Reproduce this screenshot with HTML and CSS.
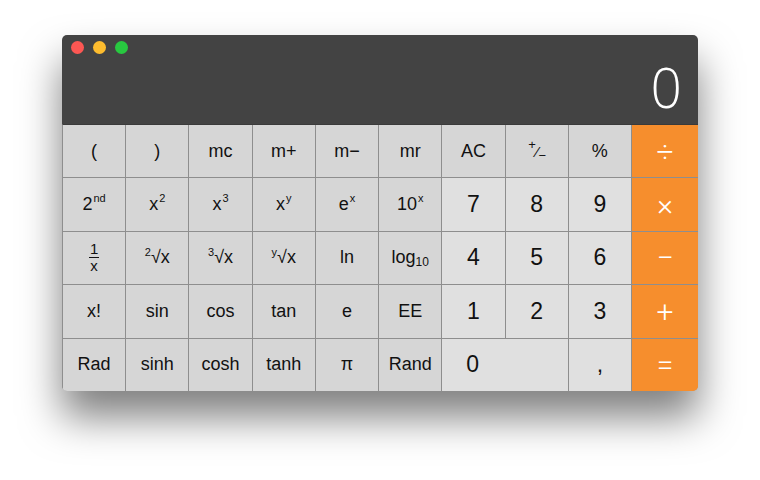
FILE: index.html
```html
<!DOCTYPE html>
<html lang="en">
<head>
    <meta charset="UTF-8">
    <title>Calculator</title>
    <link rel="stylesheet" href="styles.css">
</head>
<body>
    <div class="stage">
        <div class="window">
            <div class="display">
                <div class="lights">
                    <span class="light red"></span>
                    <span class="light yellow"></span>
                    <span class="light green"></span>
                </div>
                <div class="result">0</div>
            </div>

            <div class="keys">
                <button class="key">(</button>
                <button class="key">)</button>
                <button class="key">mc</button>
                <button class="key">m+</button>
                <button class="key">m&minus;</button>
                <button class="key">mr</button>
                <button class="key">AC</button>
                <button class="key small"><sup>+</sup>&frasl;<sub>&minus;</sub></button>
                <button class="key">%</button>
                <button class="key op">&divide;</button>

                <button class="key">2<sup>nd</sup></button>
                <button class="key">x<sup>2</sup></button>
                <button class="key">x<sup>3</sup></button>
                <button class="key">x<sup>y</sup></button>
                <button class="key">e<sup>x</sup></button>
                <button class="key">10<sup>x</sup></button>
                <button class="key num">7</button>
                <button class="key num">8</button>
                <button class="key num">9</button>
                <button class="key op">&times;</button>

                <button class="key"><span class="frac"><span>1</span><span class="den">x</span></span></button>
                <button class="key"><sup class="idx">2</sup>&radic;x</button>
                <button class="key"><sup class="idx">3</sup>&radic;x</button>
                <button class="key"><sup class="idx">y</sup>&radic;x</button>
                <button class="key">ln</button>
                <button class="key">log<sub>10</sub></button>
                <button class="key num">4</button>
                <button class="key num">5</button>
                <button class="key num">6</button>
                <button class="key op">&minus;</button>

                <button class="key">x!</button>
                <button class="key">sin</button>
                <button class="key">cos</button>
                <button class="key">tan</button>
                <button class="key">e</button>
                <button class="key">EE</button>
                <button class="key num">1</button>
                <button class="key num">2</button>
                <button class="key num">3</button>
                <button class="key op">+</button>

                <button class="key">Rad</button>
                <button class="key">sinh</button>
                <button class="key">cosh</button>
                <button class="key">tanh</button>
                <button class="key">&pi;</button>
                <button class="key">Rand</button>
                <button class="key num zero">0</button>
                <button class="key num">,</button>
                <button class="key op">=</button>
            </div>
        </div>
    </div>
</body>
</html>
```

FILE: styles.css
```css
body {
    margin: 0;
    background-color: #ffffff;
    font-family: "Liberation Sans", Arial, sans-serif;
}
.stage {
    padding: 35px 0 89px 62px;
}
.window {
    width: 636px;
    height: 356px;
    border-radius: 5px;
    overflow: hidden;
    display: flex;
    flex-direction: column;
    box-shadow: 0 26px 40px rgba(0, 0, 0, 0.5);
}
.display {
    height: 89px;
    background-color: #434343;
    display: flex;
    flex-direction: column;
    justify-content: space-between;
}
.lights {
    display: flex;
    gap: 9px;
    padding: 6px 0 0 9px;
}
.light {
    width: 13px;
    height: 13px;
    border-radius: 50%;
}
.red { background-color: #fc5753; }
.yellow { background-color: #fdbc2e; }
.green { background-color: #28c840; }
.result {
    font-family: "Open Sans", sans-serif;
    font-weight: 300;
    font-size: 55px;
    line-height: 1;
    color: #ffffff;
    text-align: right;
    padding: 0 16px 10px 0;
}
.keys {
    flex: 1;
    display: grid;
    grid-template-columns: repeat(9, 1fr) 66px;
    grid-template-rows: repeat(5, 1fr);
    gap: 1px;
    background-color: #8e8e8e;
    border-top: 1px solid #3a3a3a;
    border-left: 1px solid #8e8e8e;
}
.key {
    border: none;
    padding: 0;
    margin: 0;
    background-color: #d6d6d6;
    color: #111111;
    font-family: "Liberation Sans", Arial, sans-serif;
    font-size: 18px;
    display: flex;
    align-items: center;
    justify-content: center;
}
.key sup {
    font-size: 11px;
    position: relative;
    top: -7px;
    vertical-align: baseline;
    margin-left: 1px;
}
.key sub {
    font-size: 12px;
    position: relative;
    top: 4px;
    vertical-align: baseline;
}
.key sup.idx {
    margin: 0;
    top: -6px;
}
.small {
    font-size: 15px;
}
.small sup,
.small sub {
    font-size: 13px;
}
.frac {
    display: flex;
    flex-direction: column;
    align-items: center;
    font-size: 15px;
    line-height: 16px;
}
.frac .den {
    border-top: 1px solid #111111;
    padding: 0 1px;
}
.num {
    background-color: #e0e0e0;
    font-size: 23px;
}
.zero {
    grid-column: span 2;
    justify-content: flex-start;
    padding-left: 24px;
}
.op {
    background-color: #f68e2d;
    color: #ffffff;
    font-family: Roboto, "Liberation Sans", sans-serif;
    font-weight: 300;
    font-size: 30px;
}
```
